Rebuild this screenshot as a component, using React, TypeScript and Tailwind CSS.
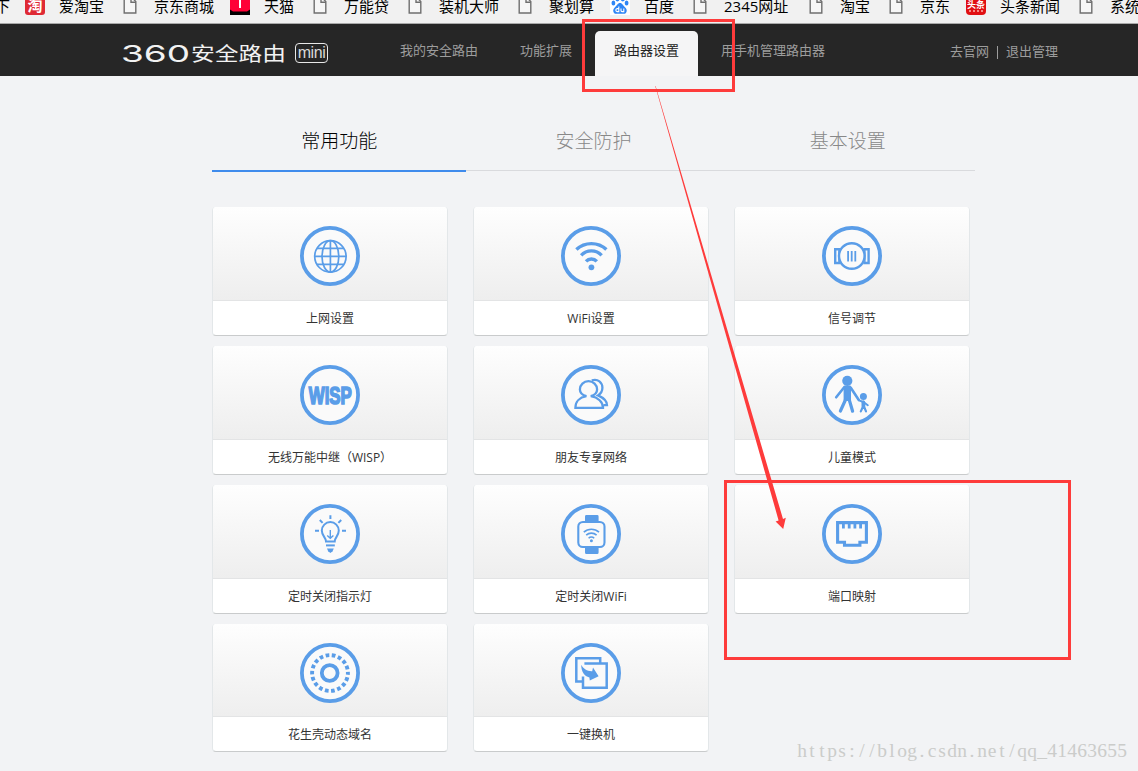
import React from 'react';

const BLUE = '#5a9de8';

const bookmarks = [
  { icon: 'taobao', label: '爱淘宝', width: 'w-[45px]' },
  { icon: 'doc', label: '京东商城', width: 'w-[60px]' },
  { icon: 'tmall', label: '天猫', width: 'w-[30px]' },
  { icon: 'doc', label: '万能贷', width: 'w-[45px]' },
  { icon: 'doc', label: '装机大师', width: 'w-[60px]' },
  { icon: 'doc', label: '聚划算', width: 'w-[45px]' },
  { icon: 'baidu', label: '百度', width: 'w-[30px]' },
  { icon: 'doc', label: '2345网址', width: 'w-[66px]' },
  { icon: 'doc', label: '淘宝', width: 'w-[30px]' },
  { icon: 'doc', label: '京东', width: 'w-[30px]' },
  { icon: 'toutiao', label: '头条新闻', width: 'w-[60px]' },
  { icon: 'doc', label: '系统', width: 'w-[30px]' },
];

const navItems = [
  { label: '我的安全路由' },
  { label: '功能扩展' },
  { label: '路由器设置', active: true },
  { label: '用手机管理路由器' },
];

const tabs = [
  { label: '常用功能', active: true },
  { label: '安全防护' },
  { label: '基本设置' },
];

const cards = [
  { label: '上网设置', Icon: GlobeIcon },
  { label: 'WiFi设置', Icon: WifiIcon },
  { label: '信号调节', Icon: SignalIcon },
  { label: '无线万能中继（WISP）', Icon: WispIcon },
  { label: '朋友专享网络', Icon: FriendsIcon },
  { label: '儿童模式', Icon: ChildIcon },
  { label: '定时关闭指示灯', Icon: BulbIcon },
  { label: '定时关闭WiFi', Icon: WatchIcon },
  { label: '端口映射', Icon: PortIcon },
  { label: '花生壳动态域名', Icon: DomainIcon },
  { label: '一键换机', Icon: SwapIcon },
];

function GlobeIcon() {
  return (
    <g strokeWidth="1.7">
      <circle cx="30.4" cy="30.4" r="15.7" />
      <ellipse cx="30.4" cy="30.4" rx="8.4" ry="15.7" />
      <path d="M30.4 14.5V46.5M14.5 30.4H46.5M17 22.4H43.8M17 38.4H43.8" />
    </g>
  );
}

function WifiIcon() {
  return (
    <g strokeWidth="3.4">
      <path d="M15.4 23.6A21.7 21.7 0 0 1 45.4 23.6" />
      <path d="M20.2 29.4A13.8 13.8 0 0 1 40.6 29.4" />
      <path d="M25 35.3A7.4 7.4 0 0 1 35.8 35.3" />
      <circle cx="30.4" cy="41.3" r="2.9" fill={BLUE} stroke="none" />
    </g>
  );
}

function SignalIcon() {
  return (
    <g strokeWidth="2.4">
      <circle cx="29.8" cy="30" r="12.8" />
      <path d="M18.5 23.2H13.2V37H18.5M41.3 23.2H46.6V37H41.3" />
      <path d="M16.9 23V37M42.9 23V37" strokeWidth="1.4" />
      <path d="M26.1 25V35.6M29.7 25V35.6M33.3 25V35.6" strokeWidth="1.8" />
    </g>
  );
}

function WispIcon() {
  return (
    <text
      x="8.8"
      y="38.8"
      fontSize="24"
      fontWeight="700"
      fontFamily="'Liberation Sans', sans-serif"
      textLength="43"
      lengthAdjust="spacingAndGlyphs"
      fill={BLUE}
      strokeWidth="1.7"
    >
      WISP
    </text>
  );
}

function FriendsIcon() {
  return (
    <g strokeWidth="2.3">
      <path d="M25.4 31.2C21.4 30 18.9 27.4 18.9 24.4A8.6 8.2 0 0 1 36.1 24.4C36.1 27.4 33.6 30 29.8 31.2C37 32.4 42 37 42 42.8H14.4C14.4 37 18.4 32.4 25.4 31.2Z" />
      <path d="M30.8 15.4C37 13.4 41.4 17.6 41.4 22.8C41.4 26 39.8 28.8 37 30.4C42.8 33 46 36.6 46 40.2H42.4" />
    </g>
  );
}

function ChildIcon() {
  return (
    <g strokeLinecap="round" strokeLinejoin="round">
      <circle cx="25.3" cy="15.8" r="5.1" fill={BLUE} stroke="none" />
      <path d="M22.6 21.6H28V35H22.6Z" fill={BLUE} strokeWidth="2" />
      <path d="M22 22.5L14.2 32.3M28.6 22.5L36.8 35" strokeWidth="2.6" />
      <path d="M23.4 35L18.4 46M27.3 35L30.6 46.2" strokeWidth="3.2" />
      <circle cx="41.4" cy="31.4" r="3.5" fill={BLUE} stroke="none" />
      <path d="M37 35.4L41.4 37L45.8 40.2M41.4 36.5V41" strokeWidth="2" />
      <path d="M41.4 37.5V41" strokeWidth="3.8" />
      <path d="M40.8 42L38.8 46.4M42.2 42L44 46.4" strokeWidth="2.2" />
    </g>
  );
}

function BulbIcon() {
  return (
    <g strokeWidth="2">
      <path d="M26 37.4C26 33.6 21.8 31.8 21.8 26.6A8.5 8.5 0 0 1 38.8 26.6C38.8 31.8 34.7 33.6 34.7 37.4Z" />
      <path d="M30.3 26V34.4M27.2 31.4L30.3 34.2L33.4 31.4" strokeWidth="1.4" />
      <path d="M26 41.4H34.8" />
      <path d="M27 44.6H33.8L32.6 47.2L30.4 49L28.2 47.2Z" fill={BLUE} stroke="none" />
      <path d="M30.4 11.2V15M19.8 16L22.6 18.9M41.2 16L38.4 18.9M15 26.8H19M42 26.8H46" />
    </g>
  );
}

function WatchIcon() {
  return (
    <g strokeWidth="2.1">
      <rect x="17.3" y="18" width="26.2" height="25" rx="4.6" />
      <path d="M24 17V12.4Q24 11 25.4 11H36.2Q37.6 11 37.6 12.4V17ZM24 43.5V48.5Q24 50 25.4 50H36.2Q37.6 50 37.6 48.5V43.5Z" fill={BLUE} stroke="none" />
      <path d="M22.8 28.2A11.2 11.2 0 0 1 38 28.2M25.2 31.2A7.6 7.6 0 0 1 35.6 31.2M27.6 34.2A4 4 0 0 1 33.2 34.2" strokeWidth="1.6" />
      <circle cx="30.4" cy="36.8" r="1.5" fill={BLUE} stroke="none" />
    </g>
  );
}

function PortIcon() {
  return (
    <g strokeWidth="3.1">
      <path d="M15.6 18.6H44.4V38.2H37.9V41.3H22.5V38.2H15.6Z" />
      <path d="M21.4 18V24.4M27.2 18V24.4M32.9 18V24.4M38.6 18V24.4" strokeWidth="2.8" />
    </g>
  );
}

function DomainIcon() {
  return (
    <g>
      <circle cx="29.7" cy="30" r="7.9" strokeWidth="3.8" />
      <circle cx="30" cy="30" r="17.9" strokeWidth="3.9" strokeDasharray="3.7 2.548" strokeDashoffset="1.85" />
    </g>
  );
}

function SwapIcon() {
  return (
    <g strokeWidth="2.5">
      <path d="M39.2 20V15.3H15.3V38.6H21" />
      <path d="M23.4 20.6H45.7V44.7H22V33.4" />
      <path d="M20.2 21.8C22.6 26 26.2 28.4 31.2 28.2L32 24.4L37.6 33.2L28.8 37.6L28.4 34.4C23.4 33.4 20.2 28.6 20.2 21.8Z" fill={BLUE} stroke="none" />
    </g>
  );
}

function Favicon({ type }: { type: string }) {
  if (type === 'taobao') {
    return (
      <span className="flex h-5 w-5 shrink-0 items-center justify-center rounded-[3px] bg-[#df2a35] text-[15px] leading-none font-bold text-white">
        淘
      </span>
    );
  }
  if (type === 'tmall') {
    return (
      <svg className="h-5 w-5 shrink-0" viewBox="0 0 20 20">
        <path d="M0 0H20V20H0Z" fill="#000" />
        <path d="M0 0H20V14.5L17 16.5H3L0 14.5Z" fill="#ff0036" />
        <path d="M5 4H15M10 4V13" stroke="#fff" strokeWidth="2" />
      </svg>
    );
  }
  if (type === 'baidu') {
    return (
      <svg className="h-5 w-5 shrink-0 bg-white" viewBox="0 0 20 20" fill="#2f86f6">
        <ellipse cx="7.4" cy="3.6" rx="2.1" ry="2.8" />
        <ellipse cx="12.8" cy="3.6" rx="2.1" ry="2.8" />
        <ellipse cx="3.4" cy="8" rx="1.9" ry="2.6" />
        <ellipse cx="16.6" cy="8" rx="1.9" ry="2.6" />
        <path d="M10 8C12.4 8 13 10.6 15 12.2C17.8 14.4 17.2 18.8 13.6 18.8C11.6 18.8 8.4 18.8 6.4 18.8C2.8 18.8 2.2 14.4 5 12.2C7 10.6 7.6 8 10 8Z" />
        <path d="M8.8 11.6V16.6H7.2Q5.8 16.4 5.8 15.1Q5.8 13.8 7.2 13.6H8.8M11 13.4V15.6Q11 16.6 12 16.6H13.8V13.4" fill="none" stroke="#fff" strokeWidth="1.1" />
      </svg>
    );
  }
  if (type === 'toutiao') {
    return (
      <span className="flex h-5 w-5 shrink-0 flex-col items-center justify-end rounded-[4px] bg-[#e10f12] pb-[2px] text-[9px] leading-[9px] font-bold text-white">
        <span>头条</span>
        <span className="mt-[1px] mb-[1px] w-3.5 border-b-2 border-dotted border-[#f58a86]" />
      </span>
    );
  }
  return (
    <svg className="h-5 w-5 shrink-0" viewBox="0 0 20 20" fill="#f6f6f6" stroke="#6f6f6f" strokeWidth="1.4">
      <path d="M4.2 2.2H11.6L15.8 6.6V18H4.2Z" />
      <path d="M11 2.2V7.2H15.8" fill="none" />
    </svg>
  );
}

function BookmarkBar() {
  return (
    <div className="h-6 overflow-hidden border-b border-[#a9a9a9] bg-[#f1f1f1]">
      <div className="-mt-[5px] -ml-[5px] flex h-5 w-[1200px] items-center gap-[15px] text-[15px] text-black">
        <span className="w-[15px] shrink-0 pt-[2px] leading-5">下</span>
        {bookmarks.map((item, i) => (
          <div key={i} className="flex shrink-0 items-center gap-[14px] pr-px">
            <Favicon type={item.icon} />
            <span className={`${item.width} pt-[2px] leading-5 whitespace-nowrap`}>{item.label}</span>
          </div>
        ))}
      </div>
    </div>
  );
}

function Logo() {
  return (
    <div className="flex w-[259px] shrink-0 items-start pt-[17px]">
      <svg className="h-6 w-[166px]" viewBox="0 0 166 24" fill="#f2f2f2">
        <text x="-1" y="20.8" fontSize="23.5" fontFamily="Inter, sans-serif" fontWeight="400" textLength="69" lengthAdjust="spacingAndGlyphs">
          360
        </text>
        <text x="69" y="20" fontSize="19" fontFamily="'Noto Sans CJK SC', sans-serif" fontWeight="400" textLength="95" lengthAdjust="spacingAndGlyphs">
          安全路由
        </text>
      </svg>
      <span className="mt-[2px] ml-[7px] h-5 w-[33px] rounded-[4px] border border-[#e8e8e8] text-center font-['Liberation_Sans'] text-[16px] leading-[17px] tracking-[-0.4px] text-[#d8d8d8]">
        mini
      </span>
    </div>
  );
}

function Header() {
  return (
    <header className="flex h-[52px] bg-[#262626] pl-[122px] text-[13px] text-[#9d9d9d]">
      <Logo />
      <nav className="flex gap-1 pt-[7px]">
        {navItems.map((item) => (
          <a
            key={item.label}
            className={
              item.active
                ? 'h-[45px] rounded-t-[5px] bg-[#f5f5f6] px-[19px] leading-[38px] whitespace-nowrap text-[#222]'
                : 'h-[45px] px-[19px] leading-[38px] whitespace-nowrap'
            }
          >
            {item.label}
          </a>
        ))}
      </nav>
      <div className="ml-auto flex h-[56px] items-center pr-[80px]">
        <a>去官网</a>
        <span className="mx-2 h-[13px] w-px bg-[#9d9d9d]" />
        <a>退出管理</a>
      </div>
    </header>
  );
}

function FeatureCard({ label, Icon }: { label: string; Icon: () => React.JSX.Element }) {
  return (
    <div className="flex h-[128.85px] flex-col overflow-hidden rounded-[4px] border-x border-b border-x-[#e3e7e9] border-b-[#c9cbcc] bg-white">
      <div className="flex h-[93.9px] shrink-0 justify-center border-b border-[#e3e4e5] bg-gradient-to-b from-[#fefefe] to-[#eeeeee] pt-[19px]">
        <svg className="h-[60px] w-[60px]" viewBox="0 0 60 60" fill="none" stroke={BLUE}>
          <circle cx="30" cy="30" r="28.1" strokeWidth="3.8" fill="#fafafa" />
          <Icon />
        </svg>
      </div>
      <div className="text-center text-xs leading-9 text-[#333]">{label}</div>
    </div>
  );
}

// red boxes and the arrow that leads from the menu entry to the port mapping card
function Annotations() {
  return (
    <div className="pointer-events-none">
      <div className="absolute top-[19px] left-[582px] h-[73px] w-[153px] border-3 border-[#fe3b3b]" />
      <div className="absolute top-[480px] left-[724px] h-[180px] w-[347px] border-3 border-[#fe3b3b]" />
      <svg className="absolute top-0 left-0 h-[771px] w-[1138px]" viewBox="0 0 1138 771" fill="#fe3b3b">
        <path d="M655.2 86L655.6 86L783 519L785.8 517.8L783.2 529L775.6 521.4L778.6 520.4Z" />
      </svg>
    </div>
  );
}

const watermark = 'https://blog.csdn.net/qq_41463655';

export default function App() {
  // one x per character keeps the watermark on a fixed 10px pitch
  const positions = watermark.split('').map((_, i) => i * 10 + 5).join(' ');

  return (
    <div className="relative h-[771px] w-[1138px] overflow-hidden bg-[#f2f3f5] font-['Open_Sans','Noto_Sans_CJK_SC',sans-serif]">
      <BookmarkBar />
      <Header />

      <main className="ml-[212px] w-[763px]">
        <div className="grid h-24 grid-cols-3 pt-[34px] font-light">
          {tabs.map((tab) => (
            <div
              key={tab.label}
              className={
                tab.active
                  ? 'h-[62px] border-b-2 border-[#3f8bec] text-center text-[19px] leading-[62px] text-black'
                  : 'h-[61px] border-b border-[#d9dadd] text-center text-[19px] leading-[62px] text-[#888]'
              }
            >
              {tab.label}
            </div>
          ))}
        </div>

        <div className="mt-[35px] grid w-[758px] grid-cols-3 gap-x-[25px] gap-y-[10px]">
          {cards.map((card) => (
            <FeatureCard key={card.label} label={card.label} Icon={card.Icon} />
          ))}
        </div>
      </main>

      <Annotations />

      <svg className="absolute top-[736px] left-[797px] h-[30px] w-[332px]" viewBox="0 0 332 30">
        <text x={positions} y="21" textAnchor="middle" fontSize="19.5" fontFamily="'Liberation Serif', serif" fill="#cbccca">
          {watermark}
        </text>
      </svg>
    </div>
  );
}
